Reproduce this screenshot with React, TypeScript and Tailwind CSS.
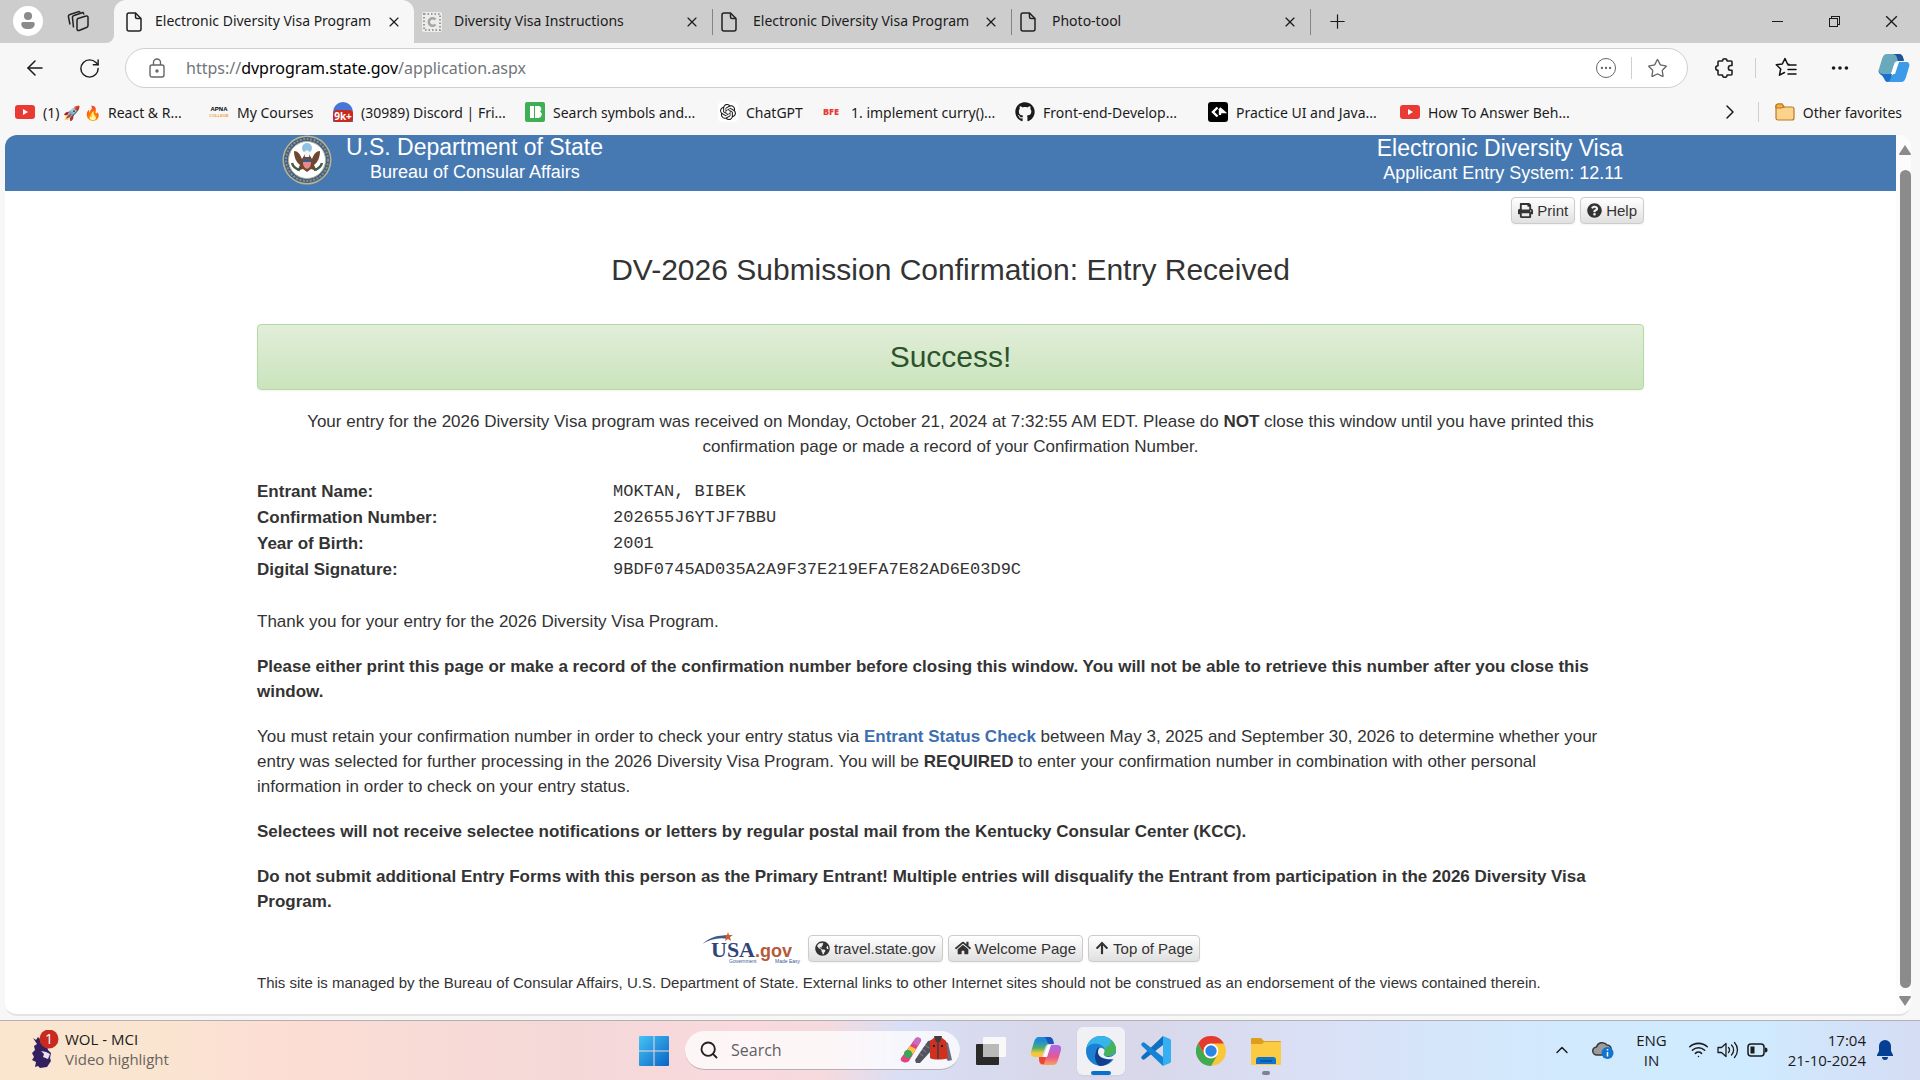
import React from 'react'
import {
  FaPrint,
  FaQuestionCircle,
  FaGlobeAmericas,
  FaHome,
  FaArrowUp,
  FaGithub,
} from 'react-icons/fa'
import { SiOpenai } from 'react-icons/si'
import {
  VscChromeMinimize,
  VscChromeRestore,
  VscChromeClose,
} from 'react-icons/vsc'
import {
  ArrowLeft,
  ChevronRight,
  ChevronUp,
  Ellipsis,
  Plus,
  RotateCw,
  Search,
  Star,
  Wifi,
  X,
} from 'lucide-react'

const FileIcon = () => (
  <svg viewBox="0 0 16 20" className="h-5 w-4 shrink-0" fill="none" stroke="#222" strokeWidth="1.5">
    <path d="M3 1h6.5L15 6.5V17a2 2 0 0 1-2 2H3a2 2 0 0 1-2-2V3a2 2 0 0 1 2-2z" />
    <path d="M9.5 1v4a1.5 1.5 0 0 0 1.5 1.5h4" />
  </svg>
)

const TemplateIcon = () => (
  <svg viewBox="0 0 20 20" className="h-5 w-5 shrink-0">
    <rect width="20" height="20" rx="2" fill="#ececea" />
    <rect x="2" y="2" width="16" height="16" fill="none" stroke="#9b9b9b" strokeWidth="2" strokeDasharray="1.5 2" />
    <path d="M13.5 7.5A3.8 3.8 0 1 0 13.5 12.5" fill="none" stroke="#a5a5a5" strokeWidth="2.5" />
  </svg>
)

const tabs = [
  { title: 'Electronic Diversity Visa Program', icon: <FileIcon />, active: true },
  { title: 'Diversity Visa Instructions', icon: <TemplateIcon />, active: false },
  { title: 'Electronic Diversity Visa Program', icon: <FileIcon />, active: false },
  { title: 'Photo-tool', icon: <FileIcon />, active: false },
]

const TabStrip = () => (
  <div className="flex h-[43px] items-center bg-[#f7f7f7]">
    <div className="flex w-[114px] shrink-0 items-center self-stretch rounded-br-lg bg-[#cdcdcd] pb-px pl-[13px]">
      <button aria-label="Profile" className="flex h-[30px] w-[30px] items-center justify-center rounded-full bg-white">
        <svg viewBox="0 0 20 20" className="h-[18px] w-[18px]" fill="#8b8b8b">
          <circle cx="10" cy="4.5" r="4.5" />
          <path d="M2.5 13a2 2 0 0 1 2-2h11a2 2 0 0 1 2 2c0 4-3 6-7.5 6s-7.5-2-7.5-6z" />
        </svg>
      </button>
      <button aria-label="Workspaces" className="ml-6">
        <svg viewBox="0 0 22 22" className="h-[22px] w-[22px]" fill="none" stroke="#222" strokeWidth="1.5">
          <path d="M13.5 2.5 12 1.5 3 4.5a2 2 0 0 0-1.5 2.5L3 14.5" />
          <path d="M17 4.5l-1-2-9 3A2 2 0 0 0 5.5 8L6.5 17.5" />
          <path d="M11 8.5l8-2.5a1.5 1.5 0 0 1 2 1.5v8a2 2 0 0 1-1.5 2l-7.5 3a1.5 1.5 0 0 1-2-1.5v-8.5a2 2 0 0 1 1-2z" />
        </svg>
      </button>
    </div>
    <div className="flex items-center self-stretch bg-[#cdcdcd]">
      {tabs.map((tab, i) => (
        <div
          key={i}
          className={
            tab.active
              ? 'flex w-[300px] items-center self-stretch rounded-t-xl bg-[#f7f7f7] px-3'
              : 'flex w-[299px] items-center self-stretch bg-[#cdcdcd] pl-2'
          }
        >
          <span className={tab.active ? 'flex w-[29px]' : 'flex w-[32px]'}>{tab.icon}</span>
          <button className="flex-1 truncate pb-[3px] text-left text-[14px]">{tab.title}</button>
          <button aria-label="Close tab" className={tab.active ? '' : 'mr-3'}>
            <X size={16} strokeWidth={1.75} />
          </button>
          {!tab.active && <span className="h-[26px] w-px bg-[#808685]" />}
        </div>
      ))}
    </div>
    <div className="flex flex-1 items-center justify-between self-stretch bg-[#cdcdcd] pr-5 pb-px pl-[15px]">
      <button aria-label="New tab">
        <Plus size={23} strokeWidth={1.25} />
      </button>
      <div className="flex items-center gap-[41px]">
        <button aria-label="Minimize"><VscChromeMinimize size={16} /></button>
        <button aria-label="Restore"><VscChromeRestore size={16} /></button>
        <button aria-label="Close"><VscChromeClose size={17} /></button>
      </div>
    </div>
  </div>
)

const CopilotIcon = () => (
  <svg viewBox="0 0 32 32" className="h-8 w-8">
    <path d="M9 2h12c3 0 4 2 5 7h-6c-2 0-3 1-4 4l-3 9H4c-3 0-4-2-3-5l3-10c1-3 2-5 5-5z" fill="#68a9bd" />
    <path d="M15 2h6c3 0 4 2 5 7h-6c-1-3-1-6-5-7z" fill="#21529c" />
    <path d="M23 30H12c-3 0-4-2-5-6h5c2 0 3-1 4-4l3-10h9c3 0 4 2 3 5l-3 10c-1 3-2 5-5 5z" fill="#3c9be8" />
    <path d="M1 18c0 3 2 4 5 4h8c-1 4-2 8-5 8-3-1-3-6-6-7-1-1-3-3-2-5z" fill="#1c71cc" />
    <path d="M17 10h4l-4 12h-4z" fill="#fff" />
  </svg>
)

const Toolbar = () => (
  <div className="flex h-[50px] items-center pr-[10px] pl-[23px]">
    <button aria-label="Back"><ArrowLeft size={24} strokeWidth={1.5} /></button>
    <button aria-label="Refresh" className="ml-[31px]"><RotateCw size={23} strokeWidth={1.5} /></button>
    <div className="ml-6 flex h-10 flex-1 items-center rounded-full border border-[#cfcfcf] bg-white pr-[19px] pl-[23px] text-[#666]">
      <svg viewBox="0 0 16 20" className="h-5 w-4" fill="none" stroke="#666" strokeWidth="1.4">
        <rect x="1" y="7" width="14" height="12" rx="2" />
        <path d="M4.5 7V4.5a3.5 3.5 0 0 1 7 0V7" />
        <circle cx="8" cy="13" r="1" fill="#666" />
      </svg>
      <div className="relative ml-[21px] flex-1 text-[16px] text-[#72767a]">
        https://<span className="text-black">dvprogram.state.gov</span>/application.aspx
        <input aria-label="Address" className="absolute inset-0 w-full bg-transparent outline-none" />
      </div>
      <button aria-label="Page actions" className="flex h-5 w-5 items-center justify-center rounded-full border border-[#666]">
        <Ellipsis size={14} strokeWidth={2} />
      </button>
      <span className="mx-[15px] h-[22px] w-px bg-[#cfcfcf]" />
      <button aria-label="Add to favorites"><Star size={21} strokeWidth={1.5} /></button>
    </div>
    <button aria-label="Extensions" className="ml-[26px]">
      <svg viewBox="0 0 22 22" className="h-[22px] w-[22px]" fill="none" stroke="#222" strokeWidth="1.6" strokeLinejoin="round">
        <path d="M8.5 4a2.3 2.3 0 0 1 4.6 0H17a1 1 0 0 1 1 1v3.5h-1.2a2.4 2.4 0 0 0 0 4.8H18V17a1 1 0 0 1-1 1h-3.900a2.300 2.300 0 0 1-4.600 0H5a1 1 0 0 1-1-1v-3.700a2.300 2.300 0 0 1 0-4.600V5a1 1 0 0 1 1-1z" />
      </svg>
    </button>
    <span className="mx-[19px] h-5 w-px bg-[#cfcfcf]" />
    <button aria-label="Favorites">
      <svg viewBox="0 0 22 22" className="h-[22px] w-[22px]" fill="none" stroke="#111" strokeWidth="1.5" strokeLinejoin="round" strokeLinecap="round">
        <path d="M14 7.5 12.5 7 10 1.5 7.3 7l-6 .8 4.4 4.2-1.2 6.2 5-2.7M13 8h8M13 12.5h8M13 17h8" />
      </svg>
    </button>
    <button aria-label="Settings and more" className="ml-8"><Ellipsis size={22} /></button>
    <button aria-label="Copilot" className="ml-[27px]"><CopilotIcon /></button>
  </div>
)

const YoutubeIcon = () => (
  <svg viewBox="0 0 20 14" className="h-[14px] w-5">
    <rect width="20" height="14" rx="3" fill="#e93a33" />
    <path d="M8 4v6l5-3z" fill="#fff" />
  </svg>
)

const bookmarks = [
  { label: '(1) 🚀 🔥\u00a0 React & R...', icon: <YoutubeIcon />, width: 'w-[194px]' },
  {
    label: 'My Courses',
    icon: (
      <svg viewBox="0 0 20 12" className="h-3 w-5 font-['Liberation_Sans',sans-serif] font-bold">
        <text x="10" y="5" textAnchor="middle" fontSize="6">APNA</text>
        <text x="10" y="11" textAnchor="middle" fontSize="4" fill="#f1a33c">COLLEGE</text>
      </svg>
    ),
    width: 'w-[124px]',
  },
  {
    label: '(30989) Discord | Fri...',
    icon: (
      <span className="flex h-5 w-5 flex-col justify-end rounded-t-full bg-[#4677d8]">
        <span className="rounded-sm bg-[#c92a20] text-center text-[10px] leading-3 font-bold text-white">9k+</span>
      </span>
    ),
    width: 'w-[192px]',
  },
  {
    label: 'Search symbols and...',
    icon: (
      <svg viewBox="0 0 20 20" className="h-5 w-5">
        <rect width="20" height="20" rx="2" fill="#3fae54" />
        <path d="M5 4h4v12H5zM10 4h3a3 3 0 0 1 2 5.5A3.5 3.5 0 0 1 13 16h-3z" fill="#fff" />
      </svg>
    ),
    width: 'w-[193px]',
  },
  {
    label: 'ChatGPT',
    icon: (
      <span className="flex h-5 w-5 items-center justify-center rounded-sm bg-white">
        <SiOpenai size={16} />
      </span>
    ),
    width: 'w-[105px]',
  },
  {
    label: '1. implement curry()...',
    icon: <span className="w-5 text-[9px] font-black text-[#e93a33]">BFE</span>,
    width: 'w-[192px]',
  },
  { label: 'Front-end-Develop...', icon: <FaGithub size={20} />, width: 'w-[193px]' },
  {
    label: 'Practice UI and Java...',
    icon: (
      <svg viewBox="0 0 20 20" className="h-5 w-5">
        <rect width="20" height="20" rx="3" fill="#000" />
        <path d="M9.5 5.5L5 10l4.5 4.5M11 8.5l1.5-1.5 3.5 3h-4v3" fill="none" stroke="#fff" strokeWidth="2.4" />
      </svg>
    ),
    width: 'w-[192px]',
  },
  { label: 'How To Answer Beh...', icon: <YoutubeIcon />, width: 'w-[190px]' },
]

const FavoritesBar = () => (
  <div className="flex h-[42px] items-center pr-[18px] pb-1 pl-[15px] text-[14px]">
    {bookmarks.map((b) => (
      <a key={b.label} href="#" className={`flex shrink-0 items-center gap-2 whitespace-nowrap ${b.width}`}>
        {b.icon}
        {b.label}
      </a>
    ))}
    <button aria-label="More favorites" className="ml-auto"><ChevronRight size={24} strokeWidth={1.5} /></button>
    <span className="mx-4 h-5 w-px bg-[#cfcfcf]" />
    <a href="#" className="flex items-center gap-2 whitespace-nowrap">
      <svg viewBox="0 0 20 18" className="h-[18px] w-5" fill="#fbd38b" stroke="#b9772c" strokeWidth="1.2">
        <path d="M1 3a2 2 0 0 1 2-2h4l2 3h8a2 2 0 0 1 2 2v9a2 2 0 0 1-2 2H3a2 2 0 0 1-2-2z" />
        <path d="M1 5h5l3-1-2-3H3a2 2 0 0 0-2 2z" fill="#f5b32f" />
      </svg>
      Other favorites
    </a>
  </div>
)

const Seal = () => (
  <svg viewBox="0 0 50 50" className="h-[50px] w-[50px]">
    <circle cx="25" cy="25" r="24.5" fill="#beb391" />
    <circle cx="25" cy="25" r="23" fill="#3d5f8c" />
    <circle cx="25" cy="25" r="21" fill="none" stroke="#8d9274" strokeWidth="2" strokeDasharray="2 1.5" />
    <circle cx="25" cy="25" r="18.5" fill="#fff" stroke="#beb391" />
    <circle cx="25" cy="13" r="5" fill="#8fc1e3" />
    <path d="M12 16c0 6 2 11 6 14l-3 6 6-2 4 3 4-3 6 2-3-6c4-3 6-8 6-14-4 0-6 3-8 8l-3-5h-4l-3 5c-2-5-4-8-8-8z" fill="#6f4630" />
    <path d="M22 17l3-2 3 2-1 5h-4z" fill="#f4f4f4" />
    <path d="M21 24h8v3h-8z" fill="#36598f" />
    <path d="M21 27h8c0 5-2 6-4 7-2-1-4-2-4-7z" fill="#e88b88" />
    <path d="M10 28c1 4 4 6 8 7M40 28c-1 4-4 6-8 7" fill="none" stroke="#3f5c4a" strokeWidth="2.5" />
  </svg>
)

const buttonStyle =
  'flex items-center gap-1 rounded-[4px] border border-[#ccc] bg-linear-to-b from-white to-[#e0e0e0] px-[6px] text-[15px] leading-[25px] text-[#333] shadow-xs'

const UsaGov = () => (
  <svg viewBox="0 0 102 32" className="h-8 w-[102px]" role="img" aria-label="USA.gov">
    <path d="M1 12C9 5 18 2 29 4l-1 3C18 5 10 7 1 12z" fill="#3b5c92" />
    <path d="M27 0l1 3 4 0-3 2 1 4-3-2-3 2 1-4-3-2h4z" fill="#c45f38" />
    <text x="10" y="25" fontFamily="Liberation Serif, serif" fontSize="22" fontWeight="bold" fill="#2f4678">
      USA
      <tspan fontFamily="Liberation Sans, sans-serif" fontSize="18" fill="#b55b3c">.gov</tspan>
    </text>
    <text x="28" y="31" fontFamily="Liberation Sans, sans-serif" fontSize="5" fill="#3b5c92">Government</text>
    <text x="74" y="31" fontFamily="Liberation Sans, sans-serif" fontSize="5" fill="#3b5c92">Made Easy</text>
  </svg>
)

const details = [
  ['Entrant Name:', 'MOKTAN, BIBEK'],
  ['Confirmation Number:', '202655J6YTJF7BBU'],
  ['Year of Birth:', '2001'],
  ['Digital Signature:', '9BDF0745AD035A2A9F37E219EFA7E82AD6E03D9C'],
]

const PageContent = () => (
  <div className="flex-1 bg-white font-['Liberation_Sans',sans-serif] text-[#333]">
    <header className="h-14 bg-[#4679b2] text-white">
      <div className="mx-auto flex max-w-[1387px] justify-between pr-[21px] pl-[25px]">
        <div className="flex gap-[14px]">
          <Seal />
          <div>
            <p className="text-[23px] leading-6">U.S. Department of State</p>
            <p className="pl-6 text-[18px] leading-[26px]">Bureau of Consular Affairs</p>
          </div>
        </div>
        <div className="text-right">
          <p className="text-[23px] leading-[26px]">Electronic Diversity Visa</p>
          <p className="text-[18px] leading-6">Applicant Entry System: 12.11</p>
        </div>
      </div>
    </header>
    <main className="mx-auto max-w-[1387px] text-[17px] leading-[25px]">
      <div className="flex justify-end gap-[5px] pt-[6px]">
        <button className={buttonStyle}><FaPrint size={15} />Print</button>
        <button className={buttonStyle}><FaQuestionCircle size={15} />Help</button>
      </div>
      <h1 className="mt-7 text-center text-[30px] leading-9">DV-2026 Submission Confirmation: Entry Received</h1>
      <div className="mt-9 rounded-[4px] border border-[#b2dba1] bg-linear-to-b from-[#e1eed9] to-[#cbe4bd] py-[14px] text-center text-[30px] leading-9 text-[#2b542c] shadow-xs">
        <h2>Success!</h2>
      </div>
      <p className="mt-[19px] text-center">
        Your entry for the 2026 Diversity Visa program was received on Monday, October 21, 2024 at 7:32:55 AM EDT. Please do <b>NOT</b> close this window until you have printed this<br />
        confirmation page or made a record of your Confirmation Number.
      </p>
      <dl className="mt-5 grid grid-cols-[356px_1fr] leading-[26px]">
        {details.map(([label, value]) => (
          <React.Fragment key={label}>
            <dt className="font-bold">{label}</dt>
            <dd className="font-['Liberation_Mono',monospace]">{value}</dd>
          </React.Fragment>
        ))}
      </dl>
      <div className="mt-[26px] flex flex-col gap-5">
        <p>Thank you for your entry for the 2026 Diversity Visa Program.</p>
        <p className="font-bold">
          Please either print this page or make a record of the confirmation number before closing this window. You will not be able to retrieve this number after you close this<br />
          window.
        </p>
        <p>
          You must retain your confirmation number in order to check your entry status via{' '}
          <a href="#" className="font-bold text-[#3c6eb0]">Entrant Status Check</a> between May 3, 2025 and September 30, 2026 to determine whether your<br />
          entry was selected for further processing in the 2026 Diversity Visa Program. You will be <b>REQUIRED</b> to enter your confirmation number in combination with other personal<br />
          information in order to check on your entry status.
        </p>
        <p className="font-bold">
          Selectees will not receive selectee notifications or letters by regular postal mail from the Kentucky Consular Center (KCC).
        </p>
        <p className="font-bold">
          Do not submit additional Entry Forms with this person as the Primary Entrant! Multiple entries will disqualify the Entrant from participation in the 2026 Diversity Visa<br />
          Program.
        </p>
      </div>
      <footer className="mt-[18px]">
        <div className="flex items-center justify-center gap-[5px]">
          <UsaGov />
          <a href="#" className={buttonStyle}><FaGlobeAmericas size={15} />travel.state.gov</a>
          <a href="#" className={buttonStyle}><FaHome size={16} />Welcome Page</a>
          <a href="#" className={buttonStyle}><FaArrowUp size={14} />Top of Page</a>
        </div>
        <p className="mt-[6px] text-[15px]">
          This site is managed by the Bureau of Consular Affairs, U.S. Department of State. External links to other Internet sites should not be construed as an endorsement of the views contained therein.
        </p>
      </footer>
    </main>
  </div>
)

const ScrollBar = () => (
  <div className="flex w-[15px] flex-col items-center gap-2 bg-[#fcfcfc] pt-[10px] pb-2 pl-[3px]">
    <svg viewBox="0 0 12 10" className="h-[10px] w-3" fill="#8b8b8b"><path d="M6 0l6 9a1 1 0 0 1-1 1H1a1 1 0 0 1-1-1z" /></svg>
    <span className="mt-[7px] w-[11px] flex-1 rounded-full bg-[#8b8b8b]" />
    <svg viewBox="0 0 12 10" className="h-[10px] w-3" fill="#8b8b8b"><path d="M6 10l6-9a1 1 0 0 0-1-1H1a1 1 0 0 0-1 1z" /></svg>
  </div>
)

const StartIcon = () => (
  <svg viewBox="0 0 30 30" className="h-[30px] w-[30px]">
    <defs>
      <linearGradient id="start" x1="0" y1="0" x2="1" y2="1">
        <stop offset="0" stopColor="#45c4f5" />
        <stop offset="1" stopColor="#0a63c4" />
      </linearGradient>
    </defs>
    <path d="M1 0h13.5v14.5H0V1a1 1 0 0 1 1-1zM15.5 0H29a1 1 0 0 1 1 1v13.5H15.5zM0 15.5h14.5V30H1a1 1 0 0 1-1-1zM15.5 15.5H30V29a1 1 0 0 1-1 1H15.5z" fill="url(#start)" />
  </svg>
)

const TaskViewIcon = () => (
  <svg viewBox="0 0 30 30" className="h-[30px] w-[30px]">
    <rect x="0" y="8" width="23" height="21" rx="1" fill="#2a2a2a" />
    <rect x="7" y="1" width="23" height="20" rx="1" fill="#f8f8f8" />
    <rect x="7" y="8" width="16" height="13" fill="#b9b9b9" />
  </svg>
)

const EdgeIcon = () => (
  <svg viewBox="0 0 30 30" className="h-[30px] w-[30px]">
    <circle cx="15" cy="15" r="15" fill="#1b7fd2" />
    <path d="M.5 12C2 4 8 0 15 0c9 0 15 7 15 13 0 5-4 7-8 7-3 0-5-1-4-3 2-3 0-8-6-9C7 7 3 8 .5 12z" fill="#35b5e9" />
    <path d="M25 4c3 2 5 6 5 9 0 5-4 7-8 7-3 0-5-1-4-3 1-2 1-4 0-5 4-1 7-4 7-8z" fill="#47b25c" />
    <path d="M10 16c0-2 1-4 3-5-2 5 1 11 8 11 3 0 5-1 6.500-1.500C25 26 20 30 14 30 9 28 8 20 10 16z" fill="#123f8d" />
    <path d="M12 16c0-3 2-5 4-4 3 1 3 3 2 5s1 4 5 4c2 0 4-.5 7-4v5l-2 1c-8 1-16-1-16-7z" fill="#f0f0f5" />
  </svg>
)

const CopilotColorIcon = () => (
  <svg viewBox="0 0 30 30" className="h-[30px] w-[30px]">
    <defs>
      <linearGradient id="cpLeft" x1="0" y1="0" x2="0" y2="1">
        <stop offset="0.2" stopColor="#1f8ad8" />
        <stop offset="0.55" stopColor="#4eb06a" />
        <stop offset="0.8" stopColor="#f5c63c" />
      </linearGradient>
      <linearGradient id="cpRight" x1="0" y1="0" x2="0" y2="1">
        <stop offset="0.2" stopColor="#b467d8" />
        <stop offset="0.6" stopColor="#ea5590" />
        <stop offset="1" stopColor="#f4a65a" />
      </linearGradient>
    </defs>
    <path d="M8 1h10c3 0 4 2 5 7h-5c-2 0-3 1-4 4l-3 9H4c-3 0-5-2-4-5l3-10c1-3 2-5 5-5z" fill="url(#cpLeft)" />
    <path d="M13 1h5c3 0 4 2 5 7h-5c-2-1-2-6-5-7z" fill="#1c54bd" />
    <path d="M22 29H12c-3 0-4-2-4-7h4c2 0 3-1 4-4l3-9h7c3 0 5 2 4 5l-3 10c-1 3-2 5-5 5z" fill="url(#cpRight)" />
    <path d="M8 21h7l-2 7h-2c-2 0-3-3-3-7z" fill="#ee4433" />
    <path d="M17 9h3l-4 12h-4z" fill="#fff" />
  </svg>
)

const VsCodeIcon = () => (
  <svg viewBox="0 0 30 30" className="h-[30px] w-[30px]">
    <path d="M22 0v9L4 23c-1 1-2 1-3 0-1-1-1-2 0-3z" fill="#0f6fc0" />
    <path d="M22 30v-9L4 7C3 6 2 6 1 7c-1 1-1 2 0 3z" fill="#1583d6" />
    <path d="M22 0l7 3 1 1v22l-1 1-7 3z" fill="#35aef2" />
  </svg>
)

const ChromeIcon = () => (
  <svg viewBox="0 0 30 30" className="h-[30px] w-[30px]">
    <circle cx="15" cy="15" r="15" fill="#fbc73a" />
    <path d="M2 7.5A15 15 0 0 1 28 7.5H15a7.5 7.5 0 0 0-6.5 11.2z" fill="#e33b32" />
    <path d="M2 7.5A15 15 0 0 0 15 30l6.5-11.3a7.5 7.5 0 0 1-13 0z" fill="#41a854" />
    <circle cx="15" cy="15" r="7.3" fill="#fff" />
    <circle cx="15" cy="15" r="5.7" fill="#2b85e4" />
  </svg>
)

const ExplorerIcon = () => (
  <svg viewBox="0 0 30 30" className="h-[30px] w-[30px]">
    <path d="M0 3a1 1 0 0 1 1-1h9l3 3h16a1 1 0 0 1 1 1v6H0z" fill="#e09c1c" />
    <path d="M0 8h11l2-2h17v22a1 1 0 0 1-1 1H1a1 1 0 0 1-1-1z" fill="#fbcb44" />
    <path d="M5 28v-4a3 3 0 0 1 3-3h14a3 3 0 0 1 3 3v4z" fill="#0f75cf" />
    <path d="M9 25h12" stroke="#0b4f95" strokeWidth="1.5" />
  </svg>
)

const SearchArt = () => (
  <svg viewBox="0 0 52 28" className="h-7 w-[52px]">
    <path d="M15 3c2-3 7-1 6 2L9 25c-2 3-10 1-8-3z" fill="#e0457f" />
    <path d="M15 3c2-3 7-1 6 2l-3 5-6-3z" fill="#c86cc0" />
    <path d="M10 10l6 3-3 5-6-3z" fill="#f8c840" />
    <circle cx="8" cy="18" r="4" fill="#3fa556" />
    <path d="M33 4l-5 1-5 7-8 12 1 3 4 0 11-12z" fill="#54545f" />
    <path d="M19 17l4 3M22 13l4 3M25 9l4 3" stroke="#85858f" />
    <path d="M43 4l5 3 4 17-4 1-6-9z" fill="#6a6b78" />
    <path d="M30 5l5-4h6l5 4 2 17c-5 2-15 2-18 0z" fill="#d1301f" />
    <path d="M34 0h8l-2 6h-4z" fill="#3c3c46" />
    <path d="M38 6v17" stroke="#3c3c46" strokeWidth="1.5" />
    <path d="M33 10h2M41 10h2" stroke="#222" strokeWidth="2" />
  </svg>
)

const apps = [
  { name: 'Task View', icon: <TaskViewIcon /> },
  { name: 'Copilot', icon: <CopilotColorIcon /> },
  { name: 'Microsoft Edge', icon: <EdgeIcon />, state: 'active' },
  { name: 'Visual Studio Code', icon: <VsCodeIcon /> },
  { name: 'Google Chrome', icon: <ChromeIcon /> },
  { name: 'File Explorer', icon: <ExplorerIcon />, state: 'running' },
]

const Taskbar = () => (
  <div className="grid h-[60px] grid-cols-[1fr_auto_1fr] items-center border-t border-[#b5afb3] bg-[linear-gradient(to_right,#fae6cf_0%,#fae5d0_8%,#fcded4_14%,#f4d8d8_30%,#f9d9dd_39%,#f5dade_43%,#d9dff6_47%,#d8d8ea_54%,#d8d8ea_60%,#dae0f6_68%,#d2e9fd_80%,#cfebff_91%,#d5dcf4_100%)] font-['Open_Sans',sans-serif] text-[15px] leading-5">
    <button className="flex items-center gap-[5px] pb-1 pl-7 text-left">
      <svg viewBox="0 0 32 38" className="h-[38px] w-8">
        <path d="M5 8l3 2 2-3 3 3 5 2 2 8 3 3-1 5 1 3-4 6-7 1-2-2-3 1 1-5-4-2 2-3-2-4 3-3-1-4 3-2z" fill="#33205f" />
        <path d="M13 21l5 1 4 2-2 5-5-2 1-3z" fill="#e8e3ee" />
        <circle cx="21" cy="9" r="9.5" fill="#c92a20" />
        <text x="21" y="14" textAnchor="middle" fontSize="14" fill="#fff">1</text>
      </svg>
      <span className="flex flex-col text-[#1b1b1b]">
        WOL - MCI<span className="text-[#696360]">Video highlight</span>
      </span>
    </button>
    <div className="flex items-center gap-[7px]">
      <button aria-label="Start" className="flex h-12 w-12 items-center justify-center"><StartIcon /></button>
      <label className="flex h-[39px] w-[275px] items-center rounded-full border-b border-[#b8aeb6] bg-white/75 pr-2 pl-[14px]">
        <Search size={20} strokeWidth={2.25} className="text-[#222]" />
        <input aria-label="Search" placeholder="Search" className="ml-3 w-0 flex-1 bg-transparent text-[16px] outline-none placeholder:text-[#5f6063]" />
        <SearchArt />
      </label>
      {apps.map((app) => (
        <button
          key={app.name}
          aria-label={app.name}
          className={
            app.state === 'active'
              ? 'relative flex h-12 w-12 items-center justify-center rounded-md bg-[#f0f0f5] shadow-xs'
              : 'relative flex h-12 w-12 items-center justify-center'
          }
        >
          {app.icon}
          {app.state === 'active' && <span className="absolute bottom-0 h-1 w-5 rounded-full bg-[#0b72cc]" />}
          {app.state === 'running' && <span className="absolute bottom-0 h-1 w-2 rounded-full bg-[#81818f]" />}
        </button>
      ))}
    </div>
    <div className="flex items-center justify-end pr-[27px] pb-[2px] text-[#1b1b1b]">
      <button aria-label="Show hidden icons"><ChevronUp size={20} strokeWidth={1.75} /></button>
      <button aria-label="OneDrive" className="ml-5">
        <svg viewBox="0 0 22 20" className="h-5 w-[22px]">
          <path d="M5 15a4 4 0 0 1-.5-8A6 6 0 0 1 15 5a4 4 0 0 1 4 5l-8 5z" fill="#9c9c9c" stroke="#3a3a3a" strokeWidth="1.5" />
          <circle cx="15.5" cy="13" r="6" fill="#0f75cf" />
          <path d="M15.5 12v4.500M15.5 9v1.5" stroke="#fff" strokeWidth="1.5" />
        </svg>
      </button>
      <button className="ml-[22px] flex flex-col items-center">
        <span>ENG</span>
        <span>IN</span>
      </button>
      <button aria-label="Network, volume and battery" className="ml-[21px] flex items-center gap-2">
        <Wifi size={21} strokeWidth={1.75} />
        <svg viewBox="0 0 22 20" className="h-5 w-[22px]" fill="none" stroke="#1b1b1b" strokeWidth="1.3" strokeLinejoin="round" strokeLinecap="round">
          <path d="M1 7.5h3.5L9 3.5v13l-4.5-4H1zM11.5 7.5a3.5 3.5 0 0 1 0 5M14.5 5a7 7 0 0 1 0 10M17.5 2.5a11 11 0 0 1 0 15" />
        </svg>
        <svg viewBox="0 0 21 14" className="h-[14px] w-[21px]" fill="none" stroke="#1b1b1b" strokeWidth="1.5">
          <rect x="1" y="1" width="16" height="12" rx="3" />
          <rect x="3.5" y="3.5" width="4" height="7" fill="#1b1b1b" stroke="none" />
          <path d="M18 4.5c2 0 2.5 1 2.5 2.5S20 9.5 18 9.5z" fill="#1b1b1b" stroke="none" />
        </svg>
      </button>
      <button className="ml-5 flex flex-col items-end">
        <span>17:04</span>
        <span>21-10-2024</span>
      </button>
      <button aria-label="Notifications" className="ml-[11px]">
        <svg viewBox="0 0 16 20" className="h-5 w-4" fill="#053f94">
          <path d="M8 0a6 6 0 0 1 6 6v5l2 4v1H0v-1l2-4V6a6 6 0 0 1 6-6zM5 17h6a3 3 0 0 1-6 0z" />
        </svg>
      </button>
    </div>
  </div>
)

const App = () => (
  <div className="flex min-h-screen flex-col bg-[#f7f7f7] font-['Noto_Sans',sans-serif] text-[#1b1b1b]">
    <TabStrip />
    <Toolbar />
    <FavoritesBar />
    <div className="mr-[9px] mb-1 ml-[5px] flex flex-1 overflow-hidden rounded-xl border-b-2 border-[#e3e3e3]">
      <PageContent />
      <ScrollBar />
    </div>
    <Taskbar />
  </div>
)

export default App
